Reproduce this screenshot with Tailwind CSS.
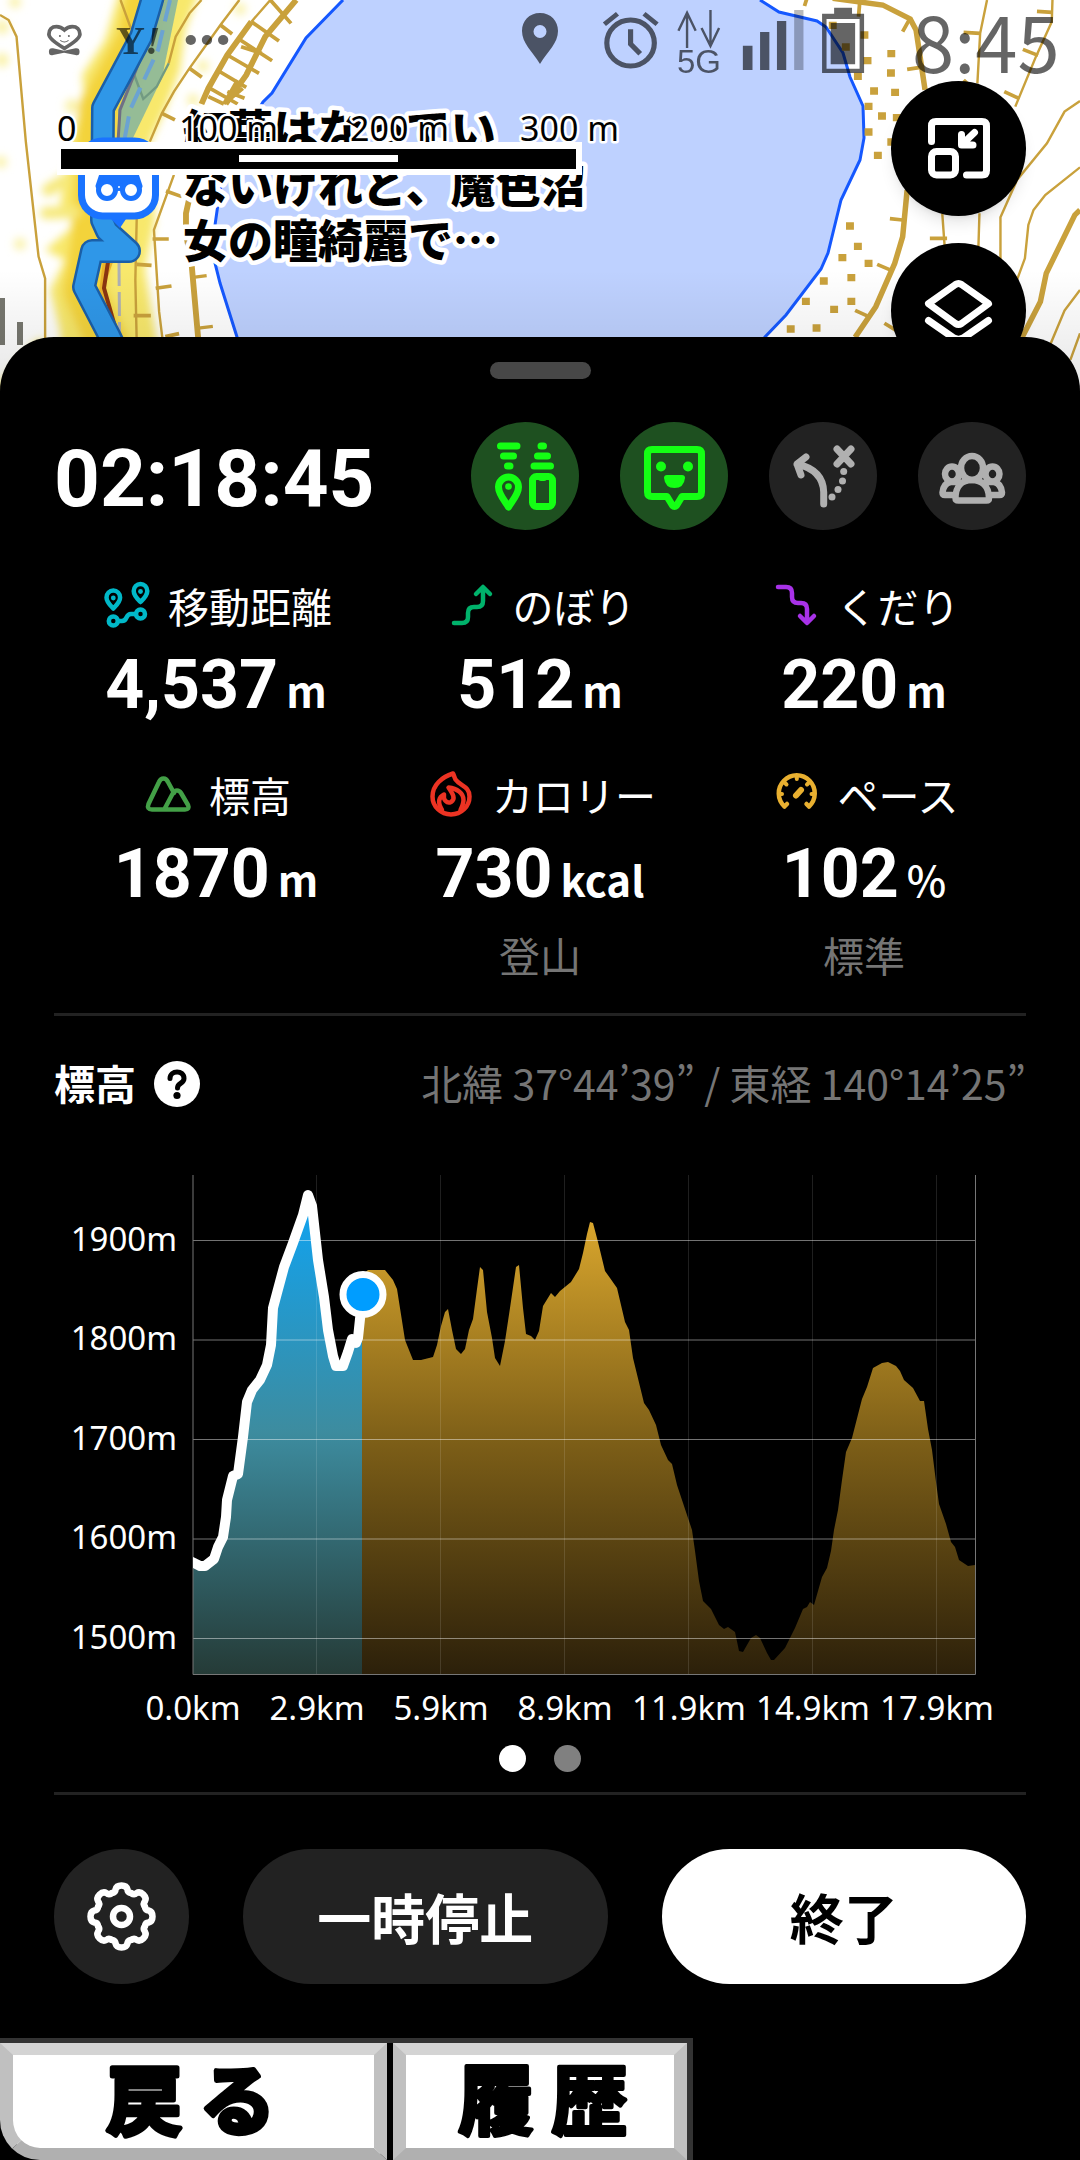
<!DOCTYPE html>
<html lang="ja">
<head>
<meta charset="utf-8">
<meta name="viewport" content="width=device-width, initial-scale=1">
<title>活動記録</title>
<script src="https://cdn.jsdelivr.net/npm/@tailwindcss/browser@4"></script>
</head>
<body class="bg-black text-white font-['Noto_Sans_CJK_JP',sans-serif]">

<!-- Map -->
<header class="relative h-[391px] overflow-hidden bg-white">
  <svg class="absolute inset-0 w-full h-full" viewBox="0 0 1080 391" preserveAspectRatio="xMidYMin slice" aria-hidden="true">
    <defs>
      <filter id="soft" x="-50%" y="-50%" width="200%" height="200%"><feGaussianBlur stdDeviation="4"/></filter>
      <linearGradient id="shade" x1="0" y1="0" x2="0" y2="1"><stop offset="0" stop-color="#000" stop-opacity="0"/><stop offset="1" stop-color="#000" stop-opacity=".1"/></linearGradient>
    </defs>
    <g filter="url(#soft)" fill="none" stroke-linejoin="round">
      <path d="M120-10H200L185 30 180 70 165 110 150 142 155 220 145 270 155 330 165 391H65L60 330 50 290 65 260 45 250 75 225 60 205 70 142 85 100 82 75 105 40Z" fill="#f8e86c"/>
      <path d="M148-10 138 40 100 108 96 160 92 240 84 290 108 345 118 400" stroke="#f3d33b" stroke-width="42"/>
      <path d="M48 190 65 180M46 213 75 212M0 391 40 345" stroke="#f6e97c" stroke-width="12" stroke-linecap="round"/>
      <g fill="#faf2a8"><circle cx="240" cy="9" r="6"/><circle cx="203" cy="66" r="6"/><circle cx="193" cy="100" r="6"/><circle cx="2" cy="27" r="7"/><circle cx="2" cy="60" r="7"/><circle cx="72" cy="106" r="7"/><circle cx="20" cy="244" r="6"/><circle cx="15" cy="2" r="6"/><circle cx="1" cy="162" r="6"/></g>
    </g>
    <path d="M343 0 306 38 272 93 263 102 228 160 220 190 215 225 215 263 220 283 237 337 250 391H730L765 337 786 315 821 269 828 253 841 200 860 160 864 138 863 106 850 77 843 53 826 27 817 21 779 12 760 0Z" fill="#bed1ff"/>
    <path d="M343 0 306 38 272 93 263 102 228 160 220 190 215 225 215 263 220 283 237 337 250 391M730 391 765 337 786 315 821 269 828 253 841 200 860 160 864 138 863 106 850 77 843 53 826 27 817 21 779 12 760 0" fill="none" stroke="#1558ff" stroke-width="3"/>
    <path d="M178 0 162 78 131 142H118V110L165 0Z" fill="#84b49d" fill-opacity=".85"/>
    <g transform="scale(.3444 .3333)" fill="none" stroke="#c9a13c" stroke-width="7">
      <path d="M0 45 25 60 48 110 75 425 112 770 131 835V1170M695 0 640 75 550 205 505 275 470 340 435 425M585 0 550 40 510 110 490 190M505 525 447 690 462 935 490 1170M397 655 393 840 400 1170M350 0 380 85M785 0 730 65"/>
      <path d="M490 190 455 260 416 297 390 225" stroke="#729a82"/>
      <path d="M640 75 674 102M550 205 586 232M470 340 508 360M482 573 528 590M443 717H490M452 865 498 858M397 793 440 796M388 947H438M480 1010 520 1001M785 0 845 70M730 65 810 123M690 115 790 182M660 165 752 220M630 210 715 262M610 265 690 312M605 290 650 312M690 240 650 312M700 140 760 160M705 265 665 300M660 275 710 295" stroke-width="11"/>
      <path d="M860 0 770 110 715 225 655 312M730 65 660 165 605 265 585 312M557 560 540 640V700L557 800 575 1010 585 1170" stroke-width="17"/>
      <path d="M555 833 600 827M570 985 618 979" stroke-width="10"/>
    </g>
    <g transform="translate(540) scale(.3444 .3333)" fill="none" stroke="#c9a13c" stroke-width="7">
      <path d="M1298 0 1278 100 1270 250M1488 0 1486 65 1440 170 1380 320M1568 303 1523 335 1472 430 1385 540 1337 652V780M1568 502 1467 585 1433 630 1418 675 1408 775 1385 840M1568 870 1523 932 1475 1050M1168 640 1175 740M1276 640 1273 740M1568 1000 1540 1080"/>
      <path d="M850-5 995 15 1075 57 1092 90 1118 270M1066 570 1053 710 1030 790 975 920 915 1012M1568 630 1553 645 1470 820 1453 905 1400 1012" stroke-width="16"/>
      <path d="M768 18 775-5M925 50 928 10M1053 95 1072 60M1066 208 1105 202M1230 97 1278 100M1443 34 1488 37M1402 148 1446 166M1348 275 1392 296M1016 656 1053 660M1132 715H1182M979 793 1020 811M915 931 950 948M1000 970 1040 995M1230 240 1250 260" stroke-width="11"/>
      <path d="M850 65v22M888 130v22M942 94v22M951 171v22M923 218v22M1020 150v22M1019 208v22M970 262v22M1031 266v22M954 308v22M993 337v22M954 385v22M981 455v22M900 667v22M923 728v22M878 762v22M954 779v22M904 822v22M824 832v22M772 893v22M904 893v22M854 917v22M803 973v22M728 976v22M1036 342v22M1020 415v22" stroke-width="23"/>
    </g>
    <path d="M103 260 113 262 104 288 120 345 134 391H112L98 300Z" fill="#e9b32c"/>
    <path d="M108 262 104 288 116 330 124 360" fill="none" stroke="#8a3510" stroke-width="4"/>
    <path d="M119 262 120 391" fill="none" stroke="#aeb0b4" stroke-width="3" stroke-dasharray="24 6"/>
    <path d="M170 0 158 50 130 110 124 142" fill="none" stroke="#6ba3d2" stroke-width="4" stroke-dasharray="22 9"/>
    <path d="M160 8 136 70 120 110 118 142" fill="none" stroke="#6f6f84" stroke-width="3"/>
    <g fill="none" stroke-linejoin="round">
      <path d="M155-10 141 37 103 108 102 220 107 231 129 251H92L84 287 110 337 136 391" stroke="#1a5fa8" stroke-width="24"/>
      <path d="M155-10 141 37 103 108 102 220 107 231 129 251H92L84 287 110 337 136 391" stroke="#2f97e8" stroke-width="19"/>
    </g>
    <path d="M0 298h5v47H0zM17 322h6v23h-6z" fill="#77776f"/>
    <path d="M108 216h20l-8 12z" fill="#1a73ff"/>
    <rect x="81.500" y="141" width="74" height="75" rx="21" fill="#fff" stroke="#1a73ff" stroke-width="7"/>
    <g fill="#fff" stroke="#1a73ff" stroke-width="5"><path d="M98 186 104 168q4-6 10-3h10q7-3 10 3l6 18z" fill="#1a73ff" stroke-linejoin="round"/><circle cx="107" cy="190" r="8.500"/><circle cx="131" cy="190" r="8.500"/><circle cx="119" cy="187" r="2.500" stroke-width="3"/></g>
    <g class="font-['Noto_Sans_CJK_JP',sans-serif] font-black text-[45px]" fill="#000" stroke="#fff" stroke-width="9" stroke-linejoin="round" paint-order="stroke">
      <text x="183" y="148">紅葉はなってい</text>
      <text x="183" y="203">ないけれど、魔色沼</text>
      <text x="183" y="258">女の瞳綺麗で…</text>
    </g>
    <path d="M57 142H582V175H57z" fill="#fff"/>
    <path d="M61 149H576V169H61z" fill="#000"/>
    <path d="M239 155H398V162H239z" fill="#fff"/>
    <g class="font-['Noto_Sans',sans-serif] text-[34px]" fill="#000" stroke="#fff" stroke-width="5" stroke-linejoin="round" paint-order="stroke">
      <text x="57" y="141">0</text><text x="179" y="141">100 m</text><text x="350" y="141">200 m</text><text x="520" y="141">300 m</text>
    </g>
    <path d="M0 270H1080V391H0z" fill="url(#shade)"/>
    <!-- Status bar -->
    <g opacity=".6">
      <g transform="scale(.3444 .3333)">
        <path d="M187 145Q142 118 142 103C142 88 151 80 164 80Q177 80 187 90Q197 80 210 80C223 80 232 88 232 103Q232 118 187 145Z" fill="none" stroke="#000" stroke-width="11"/>
        <circle cx="174" cy="108" r="3"/><circle cx="200" cy="108" r="3"/><path d="M175 121Q187 131 199 121" fill="none" stroke="#000" stroke-width="3"/>
        <path d="M142 155q0-12 12-10l32 7 33-7q12-2 12 10 0 13-12 10l-33-7-32 7q-12 3-12-10z"/>
        <circle cx="554" cy="120" r="15"/><circle cx="601" cy="120" r="15"/><circle cx="648" cy="120" r="15"/>
      </g>
      <text x="116" y="54" class="font-['Liberation_Serif',serif] font-bold text-[40px]">Y<tspan class="italic">!</tspan></text>
      <path fill-rule="evenodd" d="M540 13c-11 0-18 8-18 18 0 12 10 20 18 33 8-13 18-21 18-33 0-10-7-18-18-18zm0 12a6 6 0 1 1 0 13 6 6 0 0 1 0-13z"/>
      <g transform="translate(540) scale(.3444 .3333)">
        <g fill="none" stroke="#000"><circle cx="263" cy="129" r="69" stroke-width="15"/><path d="M263 88V132L291 161" stroke-width="15"/><path d="M187 73 225 41M302 41 340 73" stroke-width="14"/><path d="M427 144V38M402 92 427 38 452 92M495 30V138M469 84 495 138 520 84" stroke-width="7"/></g>
        <path d="M589 137h28v73h-28zM639 96h27v114h-27zM688 63h27v147h-27z"/><path d="M738 30h27v180h-27z" opacity=".45"/>
        <path fill-rule="evenodd" d="M819 41H854V23H906V41H941V219H819zM832 57V206H928V57z"/><path d="M844 69H915V193H844z"/>
      </g>
      <text x="677" y="73" class="font-['Liberation_Sans',sans-serif] text-[33px]">5G</text>
      <text x="912" y="73" class="font-['Noto_Sans_CJK_JP',sans-serif] font-normal text-[76px]">8:45</text>
    </g>
  </svg>
  <div class="absolute right-[54px] top-[81px] flex flex-col gap-[27px]">
    <button aria-label="縮小表示" class="size-[135px] rounded-full bg-black shadow-lg">
      <svg viewBox="0 0 135 135" fill="none" stroke="#fff" stroke-width="7" stroke-linecap="round" stroke-linejoin="round"><path d="M40.500 60.500V45q0-4.500 4.500-4.500h46q4.500 0 4.500 4.500v44.500q0 4.500-4.500 4.500H75.500"/><rect x="40.500" y="70.500" width="24" height="23.500" rx="5"/><path d="M70.500 53.500V64H82M72 62.500 83.500 51.500"/></svg>
    </button>
    <button aria-label="レイヤー" class="size-[135px] rounded-full bg-black shadow-lg">
      <svg viewBox="0 0 135 135" fill="none" stroke="#fff" stroke-width="7" stroke-linecap="round" stroke-linejoin="round"><path d="M64.500 41.500 37.500 60.700 64.500 80.500q3 2 6 0L97.500 60.700 70.500 41.500q-3-2-6 0zM37.500 77.500 62 94.500q5.500 3.500 11 0L97.500 77.500"/></svg>
    </button>
  </div>
</header>

<!-- Activity sheet -->
<main class="relative -mt-[54px] rounded-t-[54px] bg-black px-[54px] pt-[25px]">
  <div class="mx-auto h-[17px] w-[101px] rounded-full bg-[#474747]"></div>

  <div class="mt-[43px] flex items-center justify-between">
    <time class="h-[108px] font-['Roboto',sans-serif] text-[80px] font-bold leading-[114px]">02:18:45</time>
    <div class="flex gap-[41px]">
      <button aria-label="位置共有" class="size-[108px] rounded-full bg-[#1e5020]">
        <svg viewBox="0 0 108 108" fill="none" stroke="#14ff14" stroke-width="7" stroke-linecap="round" stroke-linejoin="round"><path d="M29.500 24H46M32.500 34h10M36.500 44h2.500M70 24h2.500M66.500 34h10M63 44h16.500"/><path d="M37.500 85C33 78 27.500 72 27.500 65a10 10 0 0 1 20 0c0 7-5.500 13-10 20z"/><circle cx="37.500" cy="64.500" r="3.300" fill="#14ff14" stroke="none"/><rect x="61.500" y="54.500" width="20" height="30" rx="4"/><path d="M70 56h3" stroke-width="6"/></svg>
      </button>
      <button aria-label="フィールドメモ" class="size-[108px] rounded-full bg-[#1e5020]">
        <svg viewBox="0 0 108 108" fill="none" stroke="#14ff14" stroke-width="7" stroke-linecap="round" stroke-linejoin="round"><path d="M32 27.500h45q4.500 0 4.500 4.500v38q0 4.500-4.500 4.500H62L56.500 83.500q-2 2-4 0L47 74.500H32q-4.500 0-4.500-4.500V32q0-4.500 4.500-4.500z"/><g fill="#14ff14" stroke="none"><circle cx="41" cy="44.500" r="5"/><circle cx="68" cy="44.500" r="5"/><path d="M47 53h15q3 0 3 3-1 10-10.500 10T44 56q0-3 3-3z"/></g></svg>
      </button>
      <button aria-label="ルート" class="size-[108px] rounded-full bg-[#222]">
        <svg viewBox="0 0 108 108" fill="none" stroke="#b0b0b0" stroke-width="7" stroke-linecap="round" stroke-linejoin="round"><path d="M54.700 82V70Q54 48 28 42M37 35 28 42 32 53M68 27 82 42M82 27 68 42"/><g fill="#b0b0b0" stroke="none"><circle cx="74.700" cy="49.500" r="3.500"/><circle cx="73.500" cy="59" r="3.500"/><circle cx="69" cy="67.500" r="3.500"/><circle cx="63" cy="75" r="3.500"/></g></svg>
      </button>
      <button aria-label="メンバー" class="size-[108px] rounded-full bg-[#222]">
        <svg viewBox="0 0 108 108" fill="none" stroke="#b0b0b0" stroke-width="6.500" stroke-linecap="round" stroke-linejoin="round"><ellipse cx="54" cy="46" rx="11" ry="12"/><ellipse cx="34" cy="52" rx="7" ry="7.500"/><ellipse cx="74.500" cy="52" rx="7" ry="7.500"/><path d="M37.500 76c0-12 7-18 16.500-18s17 6 17 18q0 2.500-2.500 2.500h-28q-3 0-3-2.500zM34 73H27q-2.500 0-2.500-2.500 1-9 8-10.500h8M74.500 73h7q2.500 0 2.500-2.500-1-9-8-10.500h-8"/></svg>
      </button>
    </div>
  </div>

  <dl class="mt-[50px] grid grid-cols-3 gap-y-[44px] text-center">
    <div>
      <dt class="flex h-[54px] justify-center gap-[14px] text-[41px] leading-[50px]">
        <svg class="size-[54px]" viewBox="0 0 54 54" fill="none" stroke="#00b8c8" stroke-width="4.500" stroke-linejoin="round"><path d="M13.300 28.500C10 25 6.500 22 6.500 17.500a6.800 7 0 0 1 13.600 0c0 4.500-3.500 7.500-6.800 11zM40.500 22C37 18.500 33.700 15.500 33.700 11a6.800 7 0 0 1 13.600 0c0 4.500-3.300 7.500-6.800 11z"/><circle cx="13.300" cy="41" r="4.500"/><circle cx="40.500" cy="34" r="4.500"/><path d="M18 41h4c6 0 3-7 9-7h5"/><g fill="#00b8c8" stroke="none"><circle cx="13.300" cy="18" r="2.400"/><circle cx="40.500" cy="11.500" r="2.400"/></g></svg>移動距離</dt>
      <dd class="mt-[11px] flex items-baseline justify-center gap-[8px] font-['Roboto',sans-serif] text-[68px] font-bold leading-[80px]">4,537<span class="font-['Noto_Sans_CJK_JP',sans-serif] text-[42px] font-bold leading-none">m</span></dd>
    </div>
    <div>
      <dt class="flex h-[54px] justify-center gap-[14px] text-[41px] leading-[50px]">
        <svg class="size-[54px]" viewBox="0 0 54 54" fill="none" stroke="#00b26b" stroke-width="4.500" stroke-linecap="round" stroke-linejoin="round"><path d="M9 43h8q6 0 6-6v-4q0-6 6-6h3q6 0 6-6V8M31 14l7-7 7 7"/></svg>のぼり</dt>
      <dd class="mt-[11px] flex items-baseline justify-center gap-[8px] font-['Roboto',sans-serif] text-[68px] font-bold leading-[80px]">512<span class="font-['Noto_Sans_CJK_JP',sans-serif] text-[42px] font-bold leading-none">m</span></dd>
    </div>
    <div>
      <dt class="flex h-[54px] justify-center gap-[14px] text-[41px] leading-[50px]">
        <svg class="size-[54px]" viewBox="0 0 54 54" fill="none" stroke="#a832e8" stroke-width="4.500" stroke-linecap="round" stroke-linejoin="round"><path d="M9 7h8q6 0 6 6v4q0 6 6 6h3q6 0 6 6v13M31 36l7 7 7-7"/></svg>くだり</dt>
      <dd class="mt-[11px] flex items-baseline justify-center gap-[8px] font-['Roboto',sans-serif] text-[68px] font-bold leading-[80px]">220<span class="font-['Noto_Sans_CJK_JP',sans-serif] text-[42px] font-bold leading-none">m</span></dd>
    </div>
    <div>
      <dt class="flex h-[54px] justify-center gap-[14px] text-[41px] leading-[50px]">
        <svg class="size-[54px]" viewBox="0 0 54 54" fill="none" stroke="#43a047" stroke-width="4.500" stroke-linecap="round" stroke-linejoin="round"><path d="M11 40.500q-5.500 0-3.500-5.500L18 13q1.500-3.500 4.500-3.500T27 13l6 11M11 40.500H44q5 0 3-4.500L40 24q-1.500-2.500-4-2.500T32 24L23.500 40"/></svg>標高</dt>
      <dd class="mt-[11px] flex items-baseline justify-center gap-[8px] font-['Roboto',sans-serif] text-[68px] font-bold leading-[80px]">1870<span class="font-['Noto_Sans_CJK_JP',sans-serif] text-[42px] font-bold leading-none">m</span></dd>
    </div>
    <div>
      <dt class="flex h-[54px] justify-center gap-[14px] text-[41px] leading-[50px]">
        <svg class="size-[54px]" viewBox="0 0 54 54" fill="none" stroke="#ec3323" stroke-width="4.500" stroke-linecap="round" stroke-linejoin="round"><path d="M29 4.500C18 8 8.500 16 8.500 27.500a18.500 18 0 0 0 37 0C45.500 17 36 17 31.500 10.500 30.500 8.500 30 6.500 29 4.500z"/><path d="M18 41C13 33 15 28 20 25.500 19 31 23 35 27 33 32 30 29 25 24.500 18.500 33 19.500 39.500 24 39.500 31 39.500 35 38 38 36.500 41"/></svg>カロリー</dt>
      <dd class="mt-[11px] flex items-baseline justify-center gap-[8px] font-['Roboto',sans-serif] text-[68px] font-bold leading-[80px]">730<span class="font-['Noto_Sans_CJK_JP',sans-serif] text-[42px] font-bold leading-none">kcal</span></dd>
      <dd class="mt-[13px] mb-[2px] text-[41px] leading-[54px] text-[#757575]">登山</dd>
    </div>
    <div>
      <dt class="flex h-[54px] justify-center gap-[14px] text-[41px] leading-[50px]">
        <svg class="size-[54px]" viewBox="0 0 54 54" fill="none" stroke="#e9b030" stroke-width="4.500" stroke-linecap="round" stroke-linejoin="round"><path d="M14.500 37.500A18 18 0 1 1 39 37.500M14.500 37.500l2.500-2.500M39 37.500l-2.500-2.500"/><path d="M26.800 8.500v1.500M14.500 13.500l2 2M39 13.500l-2 2M10 25h2M43.500 25h-2" stroke-width="4"/><path d="M26 26.500 31 21" stroke-width="6"/></svg>ペース</dt>
      <dd class="mt-[11px] flex items-baseline justify-center gap-[8px] font-['Roboto',sans-serif] text-[68px] font-bold leading-[80px]">102<span class="font-['Noto_Sans_CJK_JP',sans-serif] text-[42px] font-medium leading-none">%</span></dd>
      <dd class="mt-[13px] mb-[2px] text-[41px] leading-[54px] text-[#757575]">標準</dd>
    </div>
  </dl>

  <hr class="mt-[30px] border-0 h-[3px] bg-[#222]">

  <section>
    <div class="mt-[41px] flex h-[54px] items-center justify-between text-[41px] leading-[50px]">
      <div class="flex items-center gap-[18px]">
        <h2 class="h-[54px] font-bold">標高</h2>
        <button aria-label="標高について" class="size-[46px]">
          <svg viewBox="0 0 46 46"><circle cx="23" cy="23" r="23" fill="#fff"/><path d="M16 17.500C16 9 30 8.500 30 17.500 30 23 23.500 21.500 23.500 27" fill="none" stroke="#000" stroke-width="5" stroke-linecap="round"/><circle cx="23" cy="34.500" r="3.600"/></svg>
        </button>
      </div>
      <p class="h-[54px] font-normal text-[#757575]">北緯 37°44’39” / 東経 140°14’25”</p>
    </div>

    <svg class="mt-[49px] w-full" viewBox="54 1160 972 580" role="img" aria-label="標高グラフ">
      <defs>
        <linearGradient id="blue" gradientUnits="userSpaceOnUse" x1="0" y1="1190" x2="0" y2="1674"><stop offset="0" stop-color="#0ea4f4"/><stop offset=".5" stop-color="#3d8c9f"/><stop offset="1" stop-color="#253b37"/></linearGradient>
        <linearGradient id="gold" gradientUnits="userSpaceOnUse" x1="0" y1="1220" x2="0" y2="1674"><stop offset="0" stop-color="#d9a62d"/><stop offset=".5" stop-color="#7b5d17"/><stop offset="1" stop-color="#2c200a"/></linearGradient>
        <clipPath id="plot"><path d="M193 1170H976V1675H193z"/></clipPath>
      </defs>
      <path fill="url(#blue)" d="M193 1674V1563L200 1566 205 1566 214 1559 218 1547 223 1537 226 1517 227 1500 233 1476 238 1474 243 1437 247 1402 252 1390 260 1380 267 1365 271 1345 273 1308 277 1293 284 1267 293 1243 303 1215 308 1195 312 1206 318 1260 324 1297 328 1330 333 1356 336 1366 343 1366 348 1352 352 1339 356 1343 358 1338 360 1319 362 1294V1674Z"/>
      <path fill="url(#gold)" d="M362 1674V1275L368 1270 385 1270 393 1280 397 1289 405 1340 413 1360 421 1360 433 1357 437 1345 441 1326 445 1312 448 1309 452 1330 456 1349 461 1354 465 1349 469 1330 473 1319 477 1289 480 1267 483 1270 487 1312 492 1338 495 1358 500 1366 505 1341 510 1308 516 1267 519 1265 523 1308 526 1334 531 1336 535 1340 539 1331 543 1306 551 1293 555 1297 560 1291 571 1282 579 1269 583 1253 587 1234 590 1222 593 1223 598 1242 605 1271 610 1278 617 1288 625 1322 629 1330 633 1358 644 1403 649 1410 656 1425 661 1445 668 1460 672 1464 677 1485 683 1503 692 1530 695 1551 699 1581 703 1601 711 1609 719 1625 724 1629 728 1627 735 1632 739 1651 743 1652 751 1638 756 1635 760 1638 767 1653 771 1660 774 1660 785 1648 791 1636 795 1628 803 1609 807 1607 810 1602 814 1605 822 1577 827 1568 831 1551 834 1530 838 1510 842 1480 846 1452 852 1438 862 1399 867 1387 873 1368 882 1363 888 1362 896 1366 900 1371 904 1380 913 1388 920 1401 924 1401 928 1429 932 1450 936 1482 939 1504 946 1524 951 1542 955 1547 959 1560 968 1566 975 1565V1674Z"/>
      <path d="M316.500 1175V1674M440.500 1175V1674M564.500 1175V1674M688.500 1175V1674M812.500 1175V1674M936.500 1175V1674" stroke="#fff" stroke-opacity=".12"/>
      <path d="M193 1240.500H975M193 1340H975M193 1439.500H975M193 1539H975M193 1638.500H975" stroke="#fff" stroke-opacity=".45"/>
      <path d="M193 1175V1674.500H975.500V1175" fill="none" stroke="#777"/>
      <path clip-path="url(#plot)" fill="none" stroke="#fff" stroke-width="10" stroke-linejoin="round" d="M188 1560 194 1563 200 1566 205 1566 214 1559 218 1547 223 1537 226 1517 227 1500 233 1476 238 1474 243 1437 247 1402 252 1390 260 1380 267 1365 271 1345 273 1308 277 1293 284 1267 293 1243 303 1215 308 1195 312 1206 318 1260 324 1297 328 1330 333 1356 336 1366 343 1366 348 1352 352 1339 356 1343 358 1338 360 1319 363 1294"/>
      <circle cx="363" cy="1294.500" r="20" fill="#009dff" stroke="#fff" stroke-width="7"/>
      <g class="font-['Noto_Sans',sans-serif] text-[33px]" fill="#fff">
        <g text-anchor="end"><text x="177" y="1251">1900m</text><text x="177" y="1350">1800m</text><text x="177" y="1450">1700m</text><text x="177" y="1549">1600m</text><text x="177" y="1649">1500m</text></g>
        <g text-anchor="middle"><text x="193" y="1720">0.0km</text><text x="317" y="1720">2.9km</text><text x="441" y="1720">5.9km</text><text x="565" y="1720">8.9km</text><text x="689" y="1720">11.9km</text><text x="813" y="1720">14.9km</text><text x="937" y="1720">17.9km</text></g>
      </g>
    </svg>
    <div class="mt-[5px] flex justify-center gap-[28px]">
      <button aria-label="1ページ目" class="size-[27px] rounded-full bg-white"></button>
      <button aria-label="2ページ目" class="size-[27px] rounded-full bg-[#808080]"></button>
    </div>
  </section>

  <hr class="mt-[20px] border-0 h-[3px] bg-[#222]">

  <div class="mt-[54px] flex gap-[54px] text-[54px] font-bold leading-[81px]">
    <button aria-label="設定" class="size-[135px] shrink-0 rounded-full bg-[#222]">
      <svg viewBox="-67.500 -67.500 135 135" fill="none" stroke="#fff" stroke-width="6.500" stroke-linecap="round" stroke-linejoin="round">
        <defs><path id="tooth" d="M23.400-9.700Q24-6 27-6 31-5 31 0 31 5 27 6 24 6 23.400 9.700"/></defs>
        <use href="#tooth"/><use href="#tooth" transform="rotate(45)"/><use href="#tooth" transform="rotate(90)"/><use href="#tooth" transform="rotate(135)"/><use href="#tooth" transform="rotate(180)"/><use href="#tooth" transform="rotate(225)"/><use href="#tooth" transform="rotate(270)"/><use href="#tooth" transform="rotate(315)"/>
        <circle r="8.500"/>
      </svg>
    </button>
    <button class="h-[135px] flex-1 rounded-full bg-[#222]">一時停止</button>
    <button class="h-[135px] flex-1 rounded-full bg-white text-black">終了</button>
  </div>
</main>

<!-- Device keys -->
<nav class="mt-[54px] flex h-[122px] w-[693px] gap-[6px] border-t-[5px] border-r-[6px] border-[#333] bg-black font-['Noto_Sans_CJK_JP',sans-serif] text-[76px] font-bold">
  <button class="w-[387px] rounded-bl-[40px] border-x-[13px] border-y-[12px] border-t-[#d4d4d4] border-x-[#c0c0c0] border-b-[#b0b0b0] bg-white">
    <svg class="h-[93px] w-full" viewBox="0 0 361 93" stroke="#000" stroke-width="5" stroke-linejoin="round"><text x="178" y="74" text-anchor="middle">戻 る</text></svg>
  </button>
  <button class="flex-1 border-x-[13px] border-y-[12px] border-t-[#d4d4d4] border-x-[#c0c0c0] border-b-[#b0b0b0] bg-white">
    <svg class="h-[93px] w-full" viewBox="0 0 268 93" stroke="#000" stroke-width="4" stroke-linejoin="round"><text x="137" y="74" text-anchor="middle">履 歴</text></svg>
  </button>
</nav>
</body>
</html>
